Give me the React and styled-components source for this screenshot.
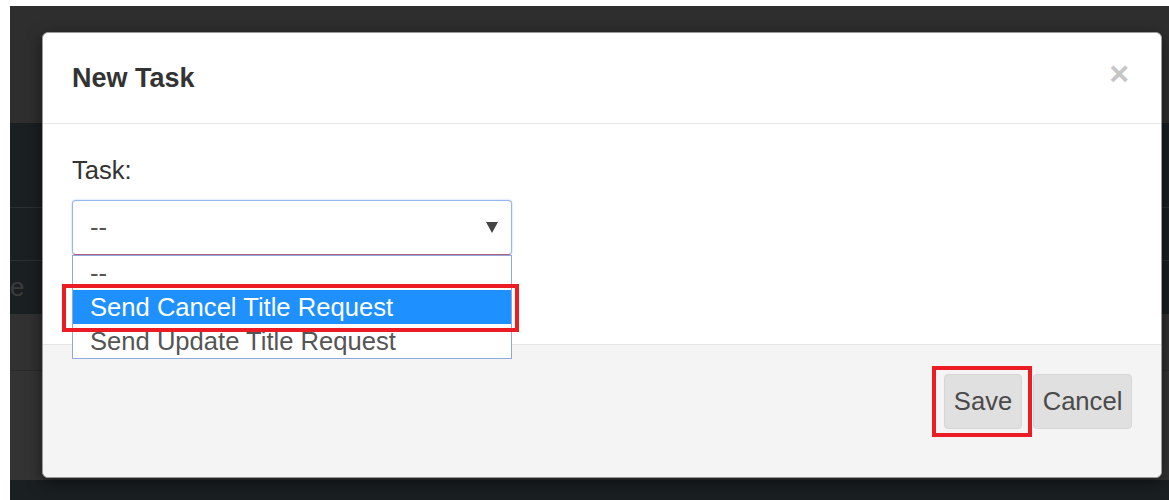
import React from 'react';
import styled, { createGlobalStyle } from 'styled-components';

const GlobalStyle = createGlobalStyle`
  html, body {
    margin: 0;
    padding: 0;
    background: #ffffff;
  }
  body {
    font-family: "Liberation Sans", Arial, sans-serif;
  }
`;

const Screen = styled.div`
  position: relative;
  width: 1169px;
  height: 500px;
  overflow: hidden;
  background: #ffffff;
  padding: 6px 0 0 10px;
  box-sizing: border-box;
`;

/* dimmed page behind the dialog */
const Backdrop = styled.div`
  display: flex;
  flex-direction: column;
  height: 494px;
  background: #1a1f22;
`;

const TopBar = styled.div`
  height: 117px;
  background: #2e2e2e;
`;

const TableRow = styled.div`
  display: flex;
  align-items: center;
  height: ${(p) => p.$h}px;
  background: ${(p) => p.$bg};
  border-bottom: 1px solid ${(p) => p.$line || 'transparent'};
  font-size: 26px;
  overflow: hidden;
`;

const GhostText = styled.span`
  line-height: 1;
  color: ${(p) => p.$color || '#3d3d3d'};
`;

/* modal */
const Dialog = styled.div`
  position: absolute;
  left: 42px;
  top: 32px;
  width: 1120px;
  height: 446px;
  box-sizing: border-box;
  display: flex;
  flex-direction: column;
  background: #ffffff;
  border: 1px solid #9a9a9a;
  border-radius: 6px;
  box-shadow: 0 5px 15px rgba(0, 0, 0, 0.5);
`;

const Header = styled.div`
  display: flex;
  align-items: center;
  justify-content: space-between;
  height: 90px;
  padding: 0 30px 0 29px;
  border-bottom: 1px solid #e8e8e8;
`;

const Title = styled.h4`
  margin: 0;
  padding-top: 1px;
  font-family: "Liberation Sans", Arial, sans-serif;
  font-size: 27px;
  font-weight: 700;
  color: #333333;
`;

const CloseButton = styled.button`
  border: 0;
  background: none;
  padding: 0;
  margin-right: 2px;
  margin-top: -10px;
  font-family: "Liberation Sans", Arial, sans-serif;
  font-size: 34px;
  font-weight: 700;
  line-height: 1;
  color: #c6c6c6;
  cursor: pointer;
`;

const Body = styled.div`
  height: 220px;
  padding: 28px 30px 0 29px;
  box-sizing: border-box;
`;

const Label = styled.label`
  display: block;
  font-size: 25.6px;
  line-height: 36px;
  color: #333333;
  margin-bottom: 12px;
`;

const SelectWrap = styled.div`
  position: relative;
  width: 440px;
  z-index: 2;
`;

const SelectBox = styled.div`
  display: flex;
  align-items: center;
  justify-content: space-between;
  height: 55px;
  box-sizing: border-box;
  padding: 0 13px 0 17px;
  border: 1px solid #95b6ee;
  border-bottom-color: #b55a84;
  border-radius: 4px;
  background: #ffffff;
  box-shadow: 0 0 2px rgba(102, 150, 230, 0.5);
  font-size: 25.6px;
  color: #555555;
`;

const Caret = styled.span`
  width: 0;
  height: 0;
  border-left: 6px solid transparent;
  border-right: 6px solid transparent;
  border-top: 11px solid #444444;
  margin-bottom: 1px;
`;

const OptionList = styled.ul`
  position: absolute;
  top: 100%;
  left: 0;
  right: 0;
  margin: 0;
  padding: 0;
  list-style: none;
  background: #ffffff;
  border: 1px solid #8ea9da;
`;

const Option = styled.li`
  position: relative;
  height: 34px;
  line-height: 34px;
  padding-left: 17px;
  font-size: 25.6px;
  color: ${(p) => (p.$active ? '#ffffff' : '#555555')};
  background: ${(p) => (p.$active ? '#1e90ff' : '#ffffff')};
  white-space: nowrap;
`;

/* red callout frames */
const Callout = styled.span`
  position: absolute;
  top: ${(p) => p.$t}px;
  right: ${(p) => p.$r}px;
  bottom: ${(p) => p.$b}px;
  left: ${(p) => p.$l}px;
  border: 4px solid #ec1c24;
  pointer-events: none;
  z-index: 3;
`;

const Footer = styled.div`
  display: flex;
  justify-content: flex-end;
  align-items: flex-start;
  gap: 11px;
  flex: 1;
  padding: 29px 29px 0;
  background: #f4f4f4;
  border-top: 1px solid #e5e5e5;
  border-radius: 0 0 6px 6px;
`;

const ButtonSlot = styled.span`
  position: relative;
  display: inline-flex;
`;

const Button = styled.button`
  height: 55px;
  width: ${(p) => p.$w}px;
  padding: 0;
  font-family: "Liberation Sans", Arial, sans-serif;
  font-size: 25.6px;
  color: #4a4a4a;
  background: #e0e0e0;
  border: 1px solid #d6d6d6;
  border-radius: 4px;
  cursor: pointer;
`;

const App = () => {
  return (
    <>
      <GlobalStyle />
      <Screen>
        <Backdrop>
          <TopBar />
          <TableRow $h={84} $bg="#1a1f22" $line="#2b3033" />
          <TableRow $h={52} $bg="#1a1f22" $line="#2b3033" />
          <TableRow $h={52} $bg="#1a1f22">
            <GhostText $color="#3a3b3b">e</GhostText>
          </TableRow>
          <TableRow $h={56} $bg="#313131" $line="#2a2a2a" />
          <TableRow $h={108} $bg="#333333" />
        </Backdrop>

        <Dialog role="dialog">
          <Header>
            <Title>New Task</Title>
            <CloseButton aria-label="Close">×</CloseButton>
          </Header>
          <Body>
            <Label>Task:</Label>
            <SelectWrap>
              <SelectBox>
                <span>--</span>
                <Caret />
              </SelectBox>
              <OptionList>
                <Option>--</Option>
                <Option $active>
                  Send Cancel Title Request
                  <Callout $t={-6} $r={-8} $b={-8} $l={-11} />
                </Option>
                <Option>Send Update Title Request</Option>
              </OptionList>
            </SelectWrap>
          </Body>
          <Footer>
            <ButtonSlot>
              <Button $w={78}>Save</Button>
              <Callout $t={-8} $r={-10} $b={-8} $l={-12} />
            </ButtonSlot>
            <Button $w={99}>Cancel</Button>
          </Footer>
        </Dialog>
      </Screen>
    </>
  );
};

export default App;
